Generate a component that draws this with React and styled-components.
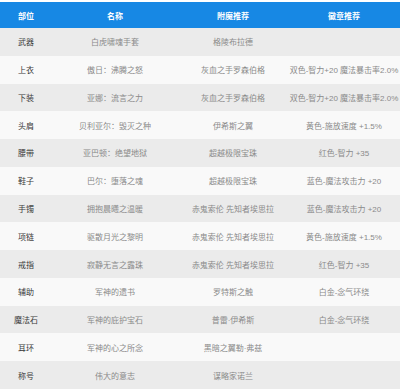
import styled, { createGlobalStyle } from "styled-components";

const GlobalStyle = createGlobalStyle`
  html, body {
    margin: 0;
    padding: 0;
    background: #ffffff;
  }
  body {
    font-family: "Liberation Sans", "Noto Sans CJK SC", sans-serif;
  }
`;

const Table = styled.div`
  margin-top: 2px;
  width: 400px;
  height: 387px;
  display: grid;
  grid-template-columns: 52px 126px 110px 112px;
  grid-template-rows: 26px repeat(13, 1fr);
`;

const Row = styled.div`
  display: contents;
`;

const HeadCell = styled.div`
  background: #1788e4;
  color: #ffffff;
  font-size: 8px;
  font-weight: bold;
  display: flex;
  align-items: center;
  justify-content: center;
  white-space: nowrap;
`;

const Cell = styled.div`
  background: ${(p) => (p.$odd ? "#ebebeb" : "#f9f9f9")};
  color: ${(p) => (p.$first ? "#3a3a3a" : "#8a8a8a")};
  font-size: 8px;
  display: flex;
  align-items: center;
  justify-content: center;
  white-space: nowrap;
`;

const rows = [
  ["武器", "白虎啸魂手套", "格陵布拉德", ""],
  ["上衣", "傲日：沸腾之怒", "灰血之手罗森伯格", "双色-智力+20 魔法暴击率2.0%"],
  ["下装", "亚娜：流言之力", "灰血之手罗森伯格", "双色-智力+20 魔法暴击率2.0%"],
  ["头肩", "贝利亚尔：毁灭之种", "伊希斯之翼", "黄色-施放速度 +1.5%"],
  ["腰带", "亚巴顿：绝望地狱", "超越极限宝珠", "红色-智力 +35"],
  ["鞋子", "巴尔：堕落之魂", "超越极限宝珠", "蓝色-魔法攻击力 +20"],
  ["手镯", "拥抱晨曦之温暖", "赤鬼索伦 先知者埃思拉", "蓝色-魔法攻击力 +20"],
  ["项链", "驱散月光之黎明", "赤鬼索伦 先知者埃思拉", "黄色-施放速度 +1.5%"],
  ["戒指", "寂静无言之露珠", "赤鬼索伦 先知者埃思拉", "红色-智力 +35"],
  ["辅助", "军神的遗书", "罗特斯之触", "白金-念气环绕"],
  ["魔法石", "军神的庇护宝石", "普雷·伊希斯", "白金-念气环绕"],
  ["耳环", "军神的心之所念", "黑暗之翼勒·弗兹", ""],
  ["称号", "伟大的意志", "谋略家诺兰", ""],
];

export default function App() {
  return (
    <>
      <GlobalStyle />
      <Table>
        <Row>
          <HeadCell>部位</HeadCell>
          <HeadCell>名称</HeadCell>
          <HeadCell>附魔推荐</HeadCell>
          <HeadCell>徽章推荐</HeadCell>
        </Row>
        {rows.map((r, i) => (
          <Row key={r[0]}>
            {r.map((c, j) => (
              <Cell key={j} $odd={i % 2 === 0} $first={j === 0}>
                {c}
              </Cell>
            ))}
          </Row>
        ))}
      </Table>
    </>
  );
}
